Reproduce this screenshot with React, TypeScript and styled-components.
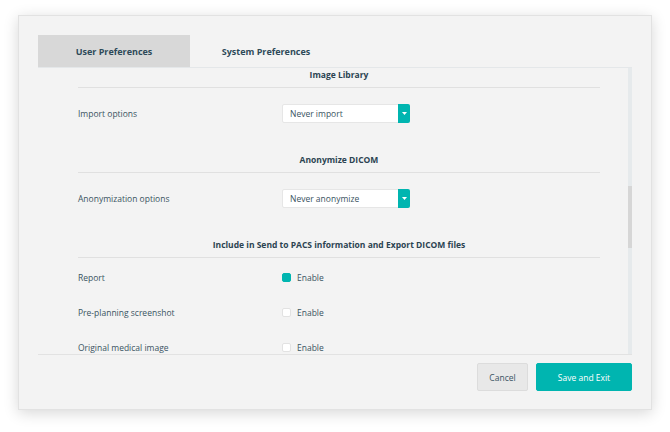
import styled, { createGlobalStyle } from "styled-components";

const GlobalStyle = createGlobalStyle`
  html, body {
    margin: 0;
    padding: 0;
    background: #ffffff;
  }
  body {
    font-family: "Open Sans", "Liberation Sans", sans-serif;
    color: #3a5362;
  }
`;

const Page = styled.div`
  width: 670px;
  height: 432px;
  padding: 15px 18px 22px;
  box-sizing: border-box;
`;

const Modal = styled.div`
  width: 634px;
  height: 395px;
  box-sizing: border-box;
  background: #f3f3f3;
  border: 1px solid #e2e2e2;
  box-shadow: 0 3px 14px rgba(0, 0, 0, 0.16);
  padding: 19px 19px 18px;
  display: flex;
  flex-direction: column;
`;

const TabBar = styled.div`
  display: flex;
  height: 32px;
`;

const Tab = styled.div<{ $active?: boolean }>`
  width: 152px;
  display: flex;
  align-items: center;
  justify-content: center;
  font-size: 9px;
  font-weight: 700;
  color: #2e4a59;
  background: ${(p) => (p.$active ? "#d8d8d8" : "transparent")};
`;

const Panel = styled.div`
  height: 288px;
  box-sizing: border-box;
  display: flex;
  border-top: 1px solid #e4e7e9;
  border-bottom: 1px solid #e2e2e2;
`;

const Content = styled.div`
  flex: 1;
  overflow: hidden;
  padding: 1px 28px 0 40px;
`;

const ScrollTrack = styled.div`
  width: 4px;
  background: #e6eaec;
  display: flex;
  flex-direction: column;
`;

const ScrollThumb = styled.div`
  margin-top: 118px;
  height: 62px;
  background: #d6d6d6;
`;

const SectionTitle = styled.div<{ $first?: boolean }>`
  margin-top: ${(p) => (p.$first ? "0" : "16px")};
  line-height: 12px;
  padding-bottom: 6px;
  border-bottom: 1px solid #e0e0e0;
  text-align: center;
  font-size: 8.5px;
  font-weight: 700;
  color: #2b4351;
`;

const SelectRow = styled.div`
  height: 50px;
  display: flex;
  align-items: center;
`;

const CheckList = styled.div`
  padding-top: 14px;
  display: flex;
  flex-direction: column;
  gap: 24px;
`;

const CheckRow = styled.div`
  height: 11px;
  display: flex;
  align-items: center;
`;

const Label = styled.div`
  width: 204px;
  font-size: 8.5px;
  line-height: 11px;
  color: #3a5362;
`;

const Select = styled.div`
  width: 128px;
  height: 19px;
  box-sizing: border-box;
  display: flex;
  background: #ffffff;
  border: 1px solid #e6e6e6;
  border-radius: 2px;
`;

const SelectValue = styled.div`
  flex: 1;
  display: flex;
  align-items: center;
  padding-left: 7px;
  font-size: 8.5px;
  color: #3a5362;
`;

const SelectArrow = styled.div`
  width: 12px;
  margin: -1px -1px -1px 0;
  background: #00b5b0;
  border-radius: 0 2px 2px 0;
  display: flex;
  align-items: center;
  justify-content: center;
`;

const Check = styled.div<{ $checked?: boolean }>`
  width: 9px;
  height: 9px;
  box-sizing: border-box;
  border-radius: 2px;
  background: ${(p) => (p.$checked ? "#00b5b0" : "#ffffff")};
  border: 1px solid ${(p) => (p.$checked ? "#00b5b0" : "#e2e2e2")};
  margin-right: 6px;
`;

const CheckText = styled.span`
  font-size: 8.5px;
  line-height: 11px;
  color: #3a5362;
`;

const Footer = styled.div`
  margin-top: 8px;
  display: flex;
  justify-content: flex-end;
  gap: 8px;
`;

const Button = styled.button<{ $primary?: boolean }>`
  height: 28px;
  box-sizing: border-box;
  padding: 0;
  width: ${(p) => (p.$primary ? "96px" : "51px")};
  border-radius: 2px;
  font-family: "Open Sans", "Liberation Sans", sans-serif;
  font-size: 8.5px;
  cursor: pointer;
  background: ${(p) => (p.$primary ? "#00b5b0" : "#e8e8e8")};
  color: ${(p) => (p.$primary ? "#ffffff" : "#3a5362")};
  border: 1px solid ${(p) => (p.$primary ? "#00b5b0" : "#dcdcdc")};
`;

const Caret = () => (
  <svg width="5" height="3" viewBox="0 0 5 3">
    <path d="M0 0 L5 0 L2.5 3 Z" fill="#ffffff" />
  </svg>
);

const Dropdown = ({ value }: { value: string }) => (
  <Select>
    <SelectValue>{value}</SelectValue>
    <SelectArrow>
      <Caret />
    </SelectArrow>
  </Select>
);

const checks = [
  { label: "Report", checked: true },
  { label: "Pre-planning screenshot", checked: false },
  { label: "Original medical image", checked: false },
];

const App = () => {
  return (
    <Page>
      <GlobalStyle />
      <Modal>
        <TabBar>
          <Tab $active>User Preferences</Tab>
          <Tab>System Preferences</Tab>
        </TabBar>
        <Panel>
          <Content>
            <SectionTitle $first>Image Library</SectionTitle>
            <SelectRow>
              <Label>Import options</Label>
              <Dropdown value="Never import" />
            </SelectRow>

            <SectionTitle>Anonymize DICOM</SectionTitle>
            <SelectRow>
              <Label>Anonymization options</Label>
              <Dropdown value="Never anonymize" />
            </SelectRow>

            <SectionTitle>Include in Send to PACS information and Export DICOM files</SectionTitle>
            <CheckList>
              {checks.map((c) => (
                <CheckRow key={c.label}>
                  <Label>{c.label}</Label>
                  <Check $checked={c.checked} />
                  <CheckText>Enable</CheckText>
                </CheckRow>
              ))}
            </CheckList>
          </Content>
          <ScrollTrack>
            <ScrollThumb />
          </ScrollTrack>
        </Panel>
        <Footer>
          <Button>Cancel</Button>
          <Button $primary>Save and Exit</Button>
        </Footer>
      </Modal>
    </Page>
  );
};

export default App;
